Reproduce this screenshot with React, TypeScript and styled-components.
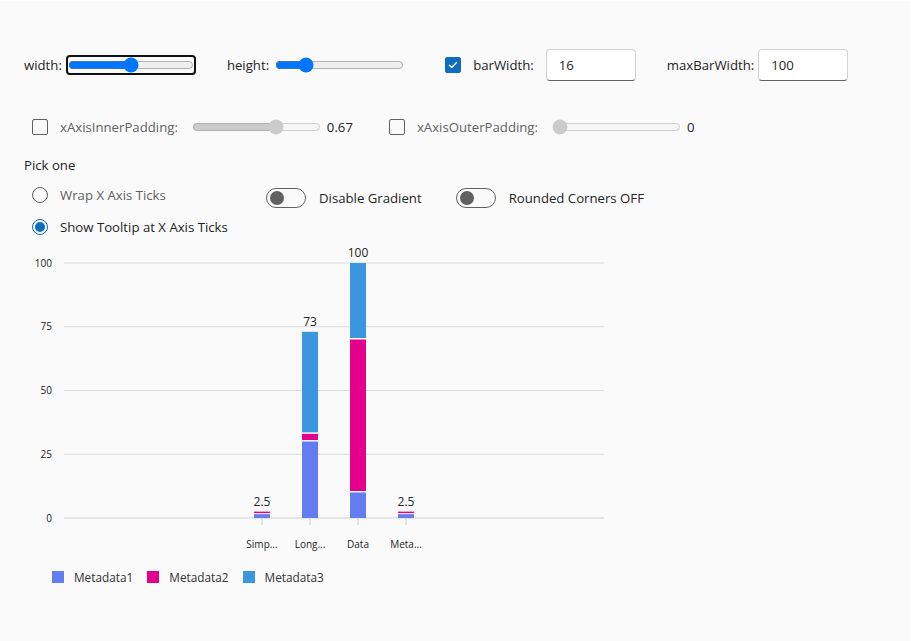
import React from "react";
import styled, { createGlobalStyle } from "styled-components";

const GlobalStyle = createGlobalStyle`
  html, body { margin: 0; background: #ffffff; }
  body { font-family: "Open Sans", "Noto Sans", sans-serif; color: #242424; }
`;

const Page = styled.div`
  margin: 1px 1px 0 0;
  min-height: 640px;
  box-sizing: border-box;
  background: #fafafa;
  padding: 48px 24px 0 24px;
  font-size: 13.2px;
`;

const ControlRow = styled.div<{ $top?: number; $gap?: number }>`
  display: flex;
  align-items: center;
  gap: ${(p) => p.$gap ?? 31}px;
  height: 32px;
  margin-top: ${(p) => p.$top ?? 0}px;
`;

const Field = styled.div`
  display: flex;
  align-items: center;
  gap: 4px;
`;

const Label = styled.span<{ $muted?: boolean }>`
  color: ${(p) => (p.$muted ? "#616161" : "#242424")};
  white-space: nowrap;
`;

const Range = styled.input`
  margin: 2px;
`;

const FocusRing = styled.span`
  display: inline-flex;
  border: 2px solid #111;
  border-radius: 4px;
  ${Range} {
    margin: 0;
    width: 126px;
  }
`;

const TextBox = styled.input`
  width: 90px;
  height: 32px;
  box-sizing: border-box;
  border: 1px solid #d1d1d1;
  border-bottom-color: #616161;
  border-radius: 4px;
  background: #fff;
  padding: 0 12px;
  font: inherit;
  color: #242424;
  outline: none;
`;

const CheckItem = styled.label`
  display: flex;
  align-items: center;
  gap: 12px;
  padding: 8px;
`;

const Box = styled.span<{ $on?: boolean }>`
  width: 16px;
  height: 16px;
  box-sizing: border-box;
  border-radius: 2px;
  border: 1px solid ${(p) => (p.$on ? "#0f6cbd" : "#616161")};
  background: ${(p) => (p.$on ? "#0f6cbd" : "transparent")};
  display: inline-flex;
  align-items: center;
  justify-content: center;
`;

const Value = styled.span`
  color: #242424;
`;

const Heading = styled.div`
  margin-top: 12px;
  line-height: 20px;
`;

const Options = styled.div`
  display: flex;
  align-items: flex-start;
  margin-top: 4px;
`;

const RadioGroup = styled.div`
  width: 242px;
  display: flex;
  flex-direction: column;
`;

const RadioItem = styled.label`
  display: flex;
  align-items: center;
  gap: 12px;
  height: 32px;
  padding-left: 8px;
`;

const Circle = styled.span<{ $on?: boolean }>`
  width: 16px;
  height: 16px;
  box-sizing: border-box;
  border-radius: 50%;
  border: 1px solid ${(p) => (p.$on ? "#0f6cbd" : "#616161")};
  display: inline-flex;
  align-items: center;
  justify-content: center;
  &::after {
    content: "";
    display: ${(p) => (p.$on ? "block" : "none")};
    width: 10px;
    height: 10px;
    border-radius: 50%;
    background: #0f6cbd;
  }
`;

const Switches = styled.div`
  display: flex;
  gap: 34px;
  margin-top: 3px;
`;

const SwitchItem = styled.label`
  display: flex;
  align-items: center;
  gap: 13px;
  height: 32px;
`;

const Track = styled.span`
  width: 40px;
  height: 20px;
  box-sizing: border-box;
  border: 1px solid #616161;
  border-radius: 10px;
  display: flex;
  align-items: center;
  padding: 0 3px;
  &::before {
    content: "";
    width: 14px;
    height: 14px;
    border-radius: 50%;
    background: #616161;
  }
`;

const ChartWrap = styled.div`
  display: block;
`;

const Legend = styled.div`
  display: flex;
  align-items: center;
  gap: 14px;
  margin-top: 10px;
  padding-left: 28px;
  height: 20px;
  font-size: 11.8px;
  color: #323130;
`;

const LegendItem = styled.div`
  display: flex;
  align-items: center;
  gap: 10px;
`;

const Swatch = styled.span<{ $color: string }>`
  width: 12px;
  height: 12px;
  background: ${(p) => p.$color};
`;

const colors = ["#637cef", "#e3008c", "#3a96dd"];

const bars = [
  { label: "Simp...", segs: [1.5, 1, 0], total: "2.5" },
  { label: "Long...", segs: [30, 3, 40], total: "73" },
  { label: "Data", segs: [10, 60, 30], total: "100" },
  { label: "Meta...", segs: [1.5, 1, 0], total: "2.5" },
];

const y = (v: number) => 275 - v * 2.55;

const Check = () => (
  <svg width="12" height="12" viewBox="0 0 12 12">
    <path d="M2.5 6.2 L4.8 8.4 L9.5 3.6" fill="none" stroke="#fff" strokeWidth="1.4" strokeLinecap="round" strokeLinejoin="round" />
  </svg>
);

const Chart = () => (
  <svg width="600" height="310" viewBox="0 0 600 310">
    {[0, 25, 50, 75, 100].map((t) => (
      <g key={t}>
        <line x1="40" x2="580" y1={y(t)} y2={y(t)} stroke={t === 0 ? "#cfcfcf" : "#dcdcdc"} strokeWidth="1" />
        <text x="28" y={y(t)} dy="3.5" textAnchor="end" fontSize="10" fill="#242424">
          {t}
        </text>
      </g>
    ))}
    {bars.map((b, i) => {
      const cx = 238 + i * 48;
      let base = 0;
      const rects = b.segs.map((v, k) => {
        if (v <= 0) return null;
        const y0 = y(base);
        const y1 = y(base + v);
        const gap = base > 0 ? 1.5 : 0;
        base += v;
        return <rect key={k} x={cx - 8} y={y1} width="16" height={Math.max(1.5, y0 - y1 - gap)} fill={colors[k]} />;
      });
      return (
        <g key={b.label}>
          <line x1={cx} x2={cx} y1="276" y2="282" stroke="#e1e1e1" strokeWidth="2" />
          {rects}
          <text x={cx} y={y(base) - 6} textAnchor="middle" fontSize="12" fill="#242424">
            {b.total}
          </text>
          <text x={cx} y="301" dy="3.5" textAnchor="middle" fontSize="10" fill="#242424">
            {b.label}
          </text>
        </g>
      );
    })}
  </svg>
);

export default function App() {
  return (
    <>
      <GlobalStyle />
      <Page>
        <ControlRow>
          <Field>
            <Label>width:</Label>
            <FocusRing>
              <Range type="range" min={0} max={100} defaultValue={50} />
            </FocusRing>
          </Field>
          <Field>
            <Label>height:</Label>
            <Range type="range" min={0} max={100} defaultValue={20} />
          </Field>
          <Field>
            <CheckItem>
              <Box $on>
                <Check />
              </Box>
              <Label>barWidth:</Label>
            </CheckItem>
            <TextBox value="16" readOnly />
          </Field>
          <Field>
            <Label>maxBarWidth:</Label>
            <TextBox value="100" readOnly />
          </Field>
        </ControlRow>

        <ControlRow $top={30} $gap={28}>
          <Field>
            <CheckItem>
              <Box />
              <Label $muted>xAxisInnerPadding:</Label>
            </CheckItem>
            <Range type="range" min={0} max={1} step={0.01} defaultValue={0.67} disabled />
            <Value>0.67</Value>
          </Field>
          <Field>
            <CheckItem>
              <Box />
              <Label $muted>xAxisOuterPadding:</Label>
            </CheckItem>
            <Range type="range" min={0} max={1} step={0.01} defaultValue={0} disabled />
            <Value>0</Value>
          </Field>
        </ControlRow>

        <Heading>Pick one</Heading>
        <Options>
          <RadioGroup>
            <RadioItem>
              <Circle />
              <Label $muted>Wrap X Axis Ticks</Label>
            </RadioItem>
            <RadioItem>
              <Circle $on />
              <Label>Show Tooltip at X Axis Ticks</Label>
            </RadioItem>
          </RadioGroup>
          <Switches>
            <SwitchItem>
              <Track />
              <Label>Disable Gradient</Label>
            </SwitchItem>
            <SwitchItem>
              <Track />
              <Label>Rounded Corners OFF</Label>
            </SwitchItem>
          </Switches>
        </Options>

        <ChartWrap>
          <Chart />
        </ChartWrap>
        <Legend>
          {["Metadata1", "Metadata2", "Metadata3"].map((m, i) => (
            <LegendItem key={m}>
              <Swatch $color={colors[i]} />
              {m}
            </LegendItem>
          ))}
        </Legend>
      </Page>
    </>
  );
}
